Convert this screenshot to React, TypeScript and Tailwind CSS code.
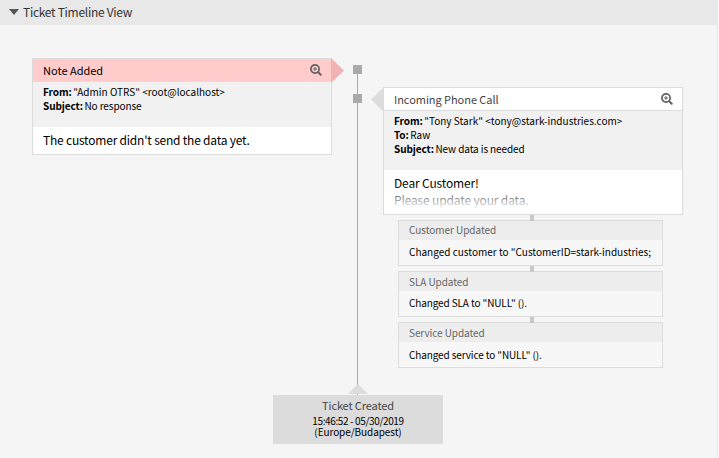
import type { ReactNode } from 'react';

function ZoomIcon() {
  return (
    <svg className="h-3 w-3 shrink-0" viewBox="0 0 12 12" fill="none" stroke="#626262">
      <circle cx="5" cy="5" r="4.1" strokeWidth="1.7" />
      <path d="M5 3v4M3 5h4" strokeWidth="1" />
      <path d="M8.2 8.2l2.5 2.5" strokeWidth="2" strokeLinecap="round" />
    </svg>
  );
}

function Field({ label, children }: { label: string; children: ReactNode }) {
  return (
    <div className="flex h-3.5 gap-[1.5px] whitespace-pre text-[10px] leading-[14px] text-black">
      <b className="tracking-[-0.08px]">{label}</b>
      {children}
    </div>
  );
}

function Update({ title, children, lift = '' }: { title: string; children: ReactNode; lift?: string }) {
  return (
    <div className="relative ml-[15px] mt-[5px] h-[46px] w-[265px] border border-[#dcdcdc] bg-[#f7f7f7] whitespace-nowrap text-[10px]">
      <div className="absolute -top-[6px] left-[131px] h-[6px] w-1 bg-[#c8c8c8]" />
      <div className={`h-[19px] bg-[#ededed] pl-2.5 text-[#666] ${lift || 'leading-[19px] tracking-[-0.08px]'}`}>{title}</div>
      <div className="pl-2.5 text-black">{children}</div>
    </div>
  );
}

export default function App() {
  return (
    <div className="flex h-[458px] w-[719px] flex-col overflow-hidden border-r border-white bg-[#f5f5f5] font-['Noto_Sans_CJK_SC','Noto_Sans',sans-serif]">
      <header className="flex h-[25px] shrink-0 items-start bg-[#e8e8e8] pl-[9px] text-[12px] text-[#333]">
        <svg className="mr-1 mt-[9px] h-[6px] w-[10px]" viewBox="0 0 10 6">
          <path d="M0 0h10L5 6z" fill="#555" />
        </svg>
        <span className="leading-6 tracking-[-0.29px]">Ticket Timeline View</span>
      </header>
      <main className="flex h-[433px] flex-col border-r border-[#e8e8e8]">
        <div className="flex h-[359px]">
          <section className="relative ml-8 mt-[33px] h-[97px] w-[300px] border border-[#dcdcdc] bg-white">
            <svg className="absolute -top-px left-[298px] h-[25px] w-[13px]" viewBox="0 0 13 25">
              <path d="M0 0l13 12.5L0 25z" fill="#f0b2b2" />
            </svg>
            <div className="flex h-[23px] items-center justify-between border-b border-[#e4dede] bg-[#ffcbcb] pl-2.5 pr-[9px]">
              <span className="text-[11px] leading-[22px] text-black">Note Added</span>
              <ZoomIcon />
            </div>
            <div className="h-[45px] bg-[#f1f1f1] pl-2.5 pt-[3px]">
              <Field label="From:"><span>"Admin OTRS" &lt;root@localhost&gt;</span></Field>
              <Field label="Subject:"><span className="tracking-[-0.1px]">No response</span></Field>
            </div>
            <p className="pl-2.5 text-[12px] leading-[25px] tracking-[-0.21px] text-black">The customer didn't send the data yet.</p>
          </section>
          <div className="ml-[21px] mt-10 flex h-[319px] w-[9px] flex-col items-center">
            <div className="h-[9px] w-[9px] bg-[#aaa]" />
            <div className="h-5 w-px bg-[#aaa]" />
            <div className="h-[9px] w-[9px] bg-[#aaa]" />
            <div className="w-px flex-1 bg-[#aaa]" />
          </div>
          <div className="ml-[21px] mt-[62px] w-[300px]">
            <section className="relative h-32 border border-[#dcdcdc] bg-white">
              <svg className="absolute -left-[13px] -top-px h-[25px] w-[13px]" viewBox="0 0 13 25">
                <path d="M13 0L0 12.5L13 25z" fill="#dcdcdc" />
              </svg>
              <div className="relative flex h-[23px] items-center justify-between border-b border-[#dcdcdc] bg-white pl-2.5 pr-[9px]">
                <span className="text-[11px] leading-[22px] tracking-[-0.05px] text-[#444]">Incoming Phone Call</span>
                <ZoomIcon />
              </div>
              <div className="relative h-[59px] bg-[#f1f1f1] pl-2.5 pt-[3px]">
                <Field label="From:"><span className="tracking-[0.02px]">"Tony Stark" &lt;tony@stark-industries.com&gt;</span></Field>
                <Field label="To:"><span>Raw</span></Field>
                <Field label="Subject:"><span className="tracking-[-0.1px]">New data is needed</span></Field>
              </div>
              <div className="relative h-11 overflow-hidden pl-2.5 pt-1 text-[12px] leading-[17px] tracking-[-0.15px] text-black">
                Dear Customer!
                <br />
                Please update your data.
                <div className="absolute inset-x-0 bottom-0 h-[30px] bg-linear-to-b from-white/0 to-white to-85%" />
              </div>
            </section>
            <Update title="Customer Updated" lift="leading-[17px] tracking-[-0.04px]">
              <div className="leading-[23px]">Changed customer to "CustomerID=stark-industries;</div>
            </Update>
            <Update title="SLA Updated">
              <div className="leading-[23px] tracking-[-0.12px]">Changed SLA to "NULL" ().</div>
            </Update>
            <Update title="Service Updated">
              <div className="leading-[25px] tracking-[-0.12px]">Changed service to "NULL" ().</div>
            </Update>
          </div>
        </div>
        <div className="relative ml-[273px] mt-[11px] flex h-[49px] w-[170px] shrink-0 flex-col items-center bg-[#dcdcdc] pt-[2px]">
          <div className="absolute -top-[11px] left-[84px] h-[11px] w-px bg-[#aaa]" />
          <svg className="absolute -top-[11px] left-[75px] h-[10px] w-[20px]" viewBox="0 0 20 10">
            <path d="M0 10L10 0l10 10z" fill="#dcdcdc" />
          </svg>
          <div className="text-[11px] leading-4 tracking-[-0.13px] text-[#444]">Ticket Created</div>
          <div className="mt-0.5 text-center text-[10px] leading-[11px] text-black">
            <div className="tracking-[-0.36px]">15:46:52 - 05/30/2019</div>
            <div className="tracking-[-0.08px]">(Europe/Budapest)</div>
          </div>
        </div>
      </main>
    </div>
  );
}
